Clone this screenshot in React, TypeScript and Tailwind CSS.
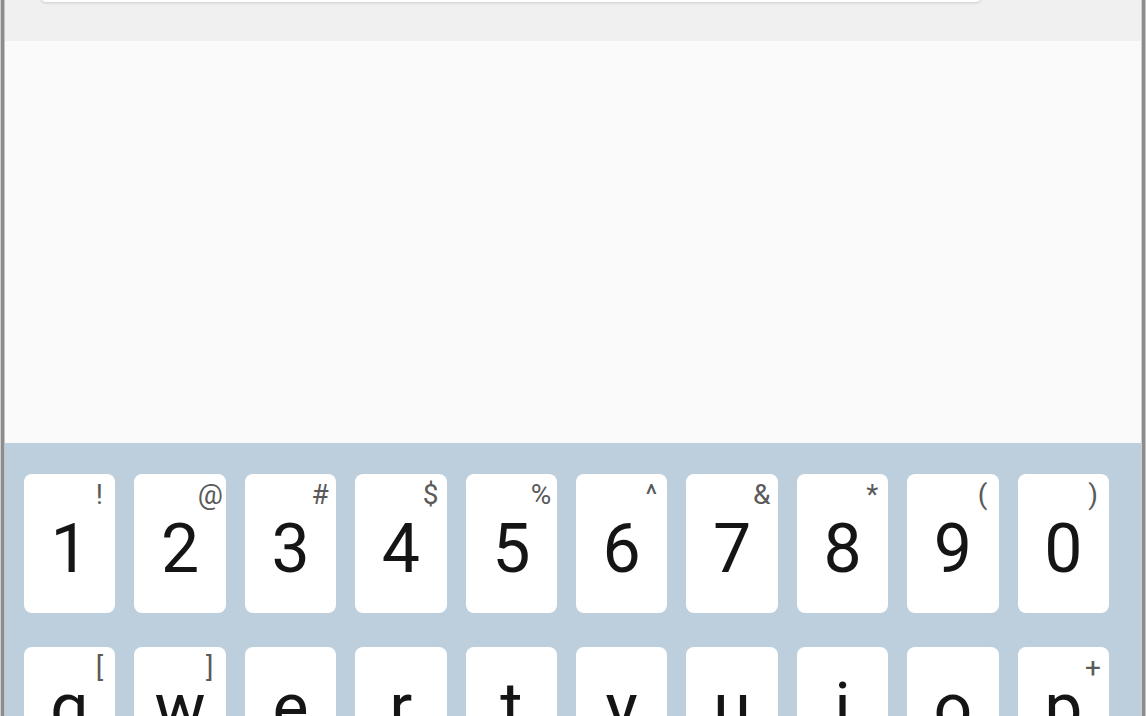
import React from "react";

const row1: [string, string][] = [
  ["1", "!"],
  ["2", "@"],
  ["3", "#"],
  ["4", "$"],
  ["5", "%"],
  ["6", "^"],
  ["7", "&"],
  ["8", "*"],
  ["9", "("],
  ["0", ")"],
];

const row2: [string, string][] = [
  ["q", "["],
  ["w", "]"],
  ["e", ""],
  ["r", ""],
  ["t", ""],
  ["y", ""],
  ["u", ""],
  ["i", ""],
  ["o", ""],
  ["p", "+"],
];

function Key({ main, hint, letter }: { main: string; hint: string; letter?: boolean }) {
  return (
    <div className="relative h-[139px] rounded-[8px] bg-white flex items-center justify-center">
      <span
        className={
          "text-[68px] leading-none text-[#151515] font-normal " +
          (letter ? "mb-[18px]" : "mt-[10px]")
        }
      >
        {main}
      </span>
      {hint && (
        <span className="absolute top-[7px] right-[4px] w-[24px] text-center text-[28px] leading-none text-[#5a5a5a]">
          {hint}
        </span>
      )}
    </div>
  );
}

function Strip() {
  return (
    <div className="flex h-full shrink-0">
      <div className="w-[1px] bg-[#cfcfcf]" />
      <div className="w-[3px] bg-[#8c8c8c]" />
      <div className="w-[1px] bg-[#c4c4c4]" />
    </div>
  );
}

export default function App() {
  return (
    <div
      className="w-[1146px] h-[716px] overflow-hidden flex bg-[#fafafa]"
      style={{ fontFamily: "Roboto, 'Noto Sans', sans-serif" }}
    >
      <Strip />
      <div className="flex-1 flex flex-col min-w-0">
        <div className="h-[41px] shrink-0 bg-[#f0f0f0]">
          <div className="ml-[35px] w-[942px] h-[24px] mt-[-21px] bg-white rounded-b-[6px] border border-[#d9d9d9] shadow-[0_1px_2px_rgba(0,0,0,0.08)]" />
        </div>
        <div className="h-[402px] shrink-0 bg-[#fafafa]" />
        <div className="flex-1 bg-[#bdcfdc] pt-[31px] pl-[19px] pr-[32px]">
          <div className="grid grid-cols-10 gap-x-[19px]">
            {row1.map(([m, h]) => (
              <Key key={m} main={m} hint={h} />
            ))}
          </div>
          <div className="grid grid-cols-10 gap-x-[19px] mt-[34px]">
            {row2.map(([m, h]) => (
              <Key key={m} main={m} hint={h} letter />
            ))}
          </div>
        </div>
      </div>
      <Strip />
    </div>
  );
}
